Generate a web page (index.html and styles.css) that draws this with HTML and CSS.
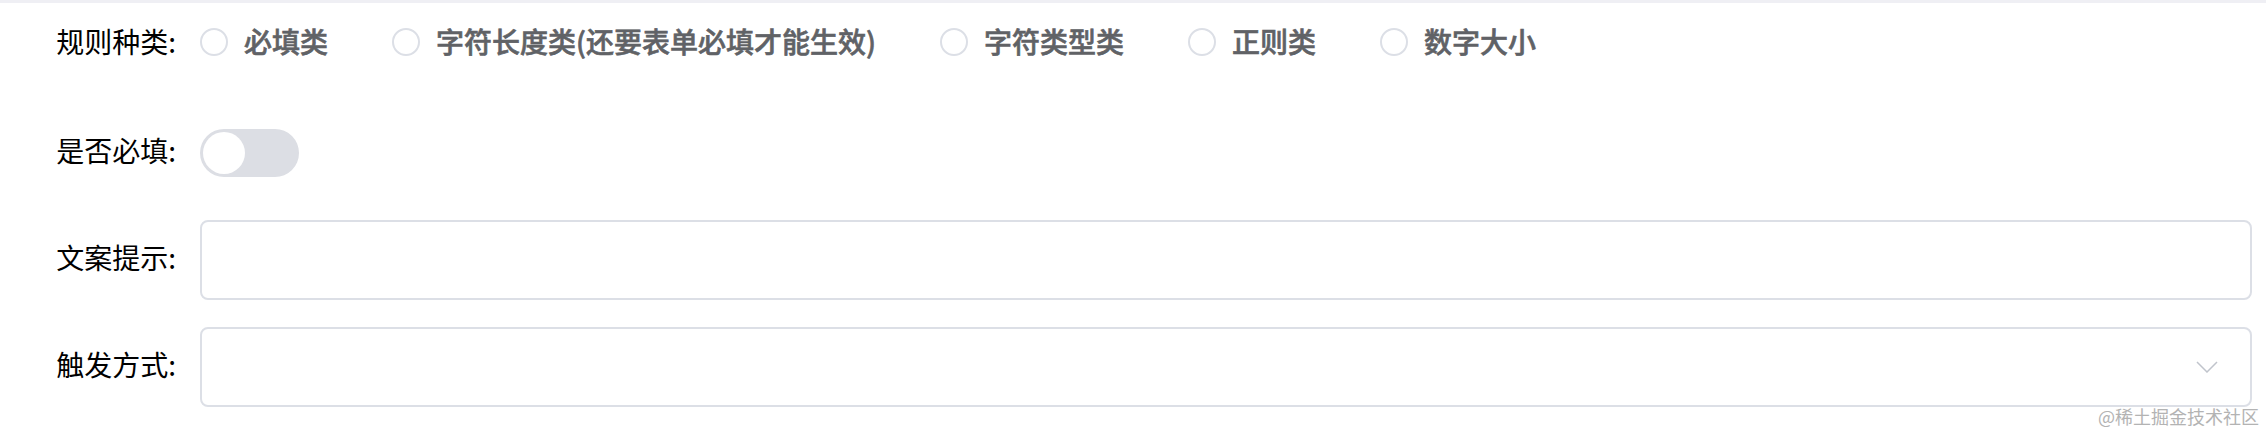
FILE: index.html
```html
<!DOCTYPE html>
<html lang="zh-CN">
<head>
<meta charset="utf-8">
<title>规则表单</title>
<link rel="stylesheet" href="styles.css">
</head>
<body>
<div class="topbar"></div>
<form class="form">
  <div class="row row-first">
    <label class="label">规则种类:</label>
    <div class="control radios">
      <label class="radio"><span class="radio-dot"></span><span class="radio-text">必填类</span></label>
      <label class="radio"><span class="radio-dot"></span><span class="radio-text">字符长度类(还要表单必填才能生效)</span></label>
      <label class="radio"><span class="radio-dot"></span><span class="radio-text">字符类型类</span></label>
      <label class="radio"><span class="radio-dot"></span><span class="radio-text">正则类</span></label>
      <label class="radio"><span class="radio-dot"></span><span class="radio-text">数字大小</span></label>
    </div>
  </div>
  <div class="row">
    <label class="label">是否必填:</label>
    <div class="control">
      <span class="switch"><span class="switch-knob"></span></span>
    </div>
  </div>
  <div class="row">
    <label class="label">文案提示:</label>
    <div class="control">
      <div class="input"></div>
    </div>
  </div>
  <div class="row">
    <label class="label">触发方式:</label>
    <div class="control">
      <div class="input select">
        <svg class="chevron" width="22" height="12" viewBox="0 0 22 12"><polyline points="1,1 11,11 21,1" fill="none" stroke="#c0c4cc" stroke-width="1.5"/></svg>
      </div>
    </div>
  </div>
</form>
<div class="watermark">@稀土掘金技术社区</div>
</body>
</html>
```
FILE: styles.css
```css
html, body {
  margin: 0;
  padding: 0;
  background: #ffffff;
}
body {
  font-family: "Noto Sans CJK SC", "Noto Sans", sans-serif;
  width: 2266px;
  height: 434px;
  overflow: hidden;
}
.topbar {
  height: 3px;
  background: #efeff4;
}
.form {
  display: flex;
  flex-direction: column;
  gap: 27px;
  padding: 1px 14px 0 0;
}
.row {
  display: flex;
  align-items: center;
  height: 80px;
}
.row-first {
  margin-bottom: 2px;
}
.label {
  flex: 0 0 200px;
  box-sizing: border-box;
  padding: 0 24px 7px 0;
  text-align: right;
  font-size: 28px;
  line-height: 80px;
  color: #000000;
}
.control {
  flex: 1;
  display: flex;
  align-items: center;
  height: 80px;
}
.radios {
  gap: 64px;
}
.radio {
  display: flex;
  align-items: center;
  gap: 16px;
}
.radio-dot {
  width: 28px;
  height: 28px;
  box-sizing: border-box;
  border: 2px solid #dcdfe6;
  border-radius: 50%;
  background: #ffffff;
  margin-top: -4px;
}
.radio-text {
  font-size: 28px;
  font-weight: 500;
  color: #606266;
  -webkit-text-stroke: 0.6px #606266;
  line-height: 40px;
  margin-top: -7px;
}
.switch {
  display: flex;
  align-items: center;
  width: 99px;
  height: 48px;
  box-sizing: border-box;
  padding: 0 3px;
  border-radius: 24px;
  background: #dcdee4;
}
.switch-knob {
  width: 42px;
  height: 42px;
  border-radius: 50%;
  background: #ffffff;
}
.input {
  flex: 1;
  height: 80px;
  box-sizing: border-box;
  border: 2px solid #dcdfe6;
  border-radius: 8px;
  background: #ffffff;
}
.select {
  display: flex;
  align-items: center;
  justify-content: flex-end;
  padding-right: 32px;
}
.chevron {
  display: block;
}
.watermark {
  position: absolute;
  right: 7px;
  top: 404px;
  font-size: 18px;
  line-height: 24px;
  color: #b3b3b3;
}
```
